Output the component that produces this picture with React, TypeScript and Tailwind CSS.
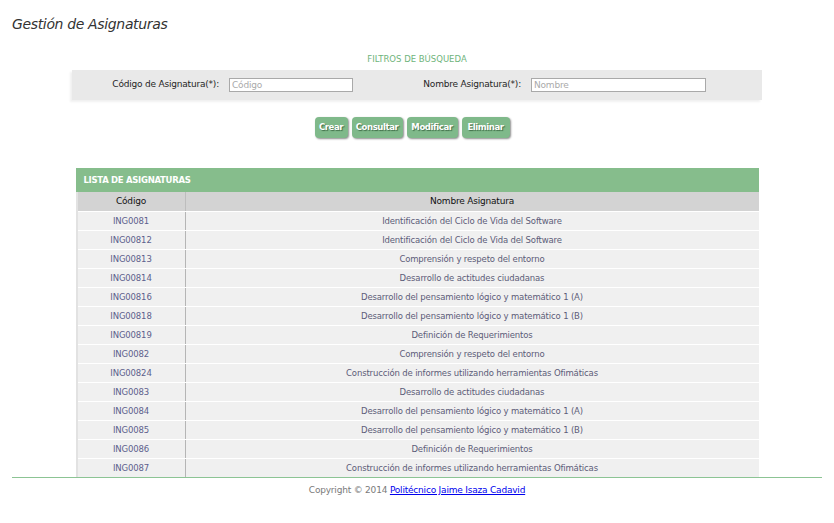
import React from "react";

const rows: [string, string][] = [
  ["ING0081", "Identificación del Ciclo de Vida del Software"],
  ["ING00812", "Identificación del Ciclo de Vida del Software"],
  ["ING00813", "Comprensión y respeto del entorno"],
  ["ING00814", "Desarrollo de actitudes ciudadanas"],
  ["ING00816", "Desarrollo del pensamiento lógico y matemático 1 (A)"],
  ["ING00818", "Desarrollo del pensamiento lógico y matemático 1 (B)"],
  ["ING00819", "Definición de Requerimientos"],
  ["ING0082", "Comprensión y respeto del entorno"],
  ["ING00824", "Construcción de informes utilizando herramientas Ofimáticas"],
  ["ING0083", "Desarrollo de actitudes ciudadanas"],
  ["ING0084", "Desarrollo del pensamiento lógico y matemático 1 (A)"],
  ["ING0085", "Desarrollo del pensamiento lógico y matemático 1 (B)"],
  ["ING0086", "Definición de Requerimientos"],
  ["ING0087", "Construcción de informes utilizando herramientas Ofimáticas"],
];

function Btn({ label, w }: { label: string; w: string }) {
  return (
    <button
      className={`${w} h-[21px] rounded-[4px] bg-[#7fb98a] text-white font-bold text-[8.5px] tracking-[-0.4px] [text-shadow:1px_1px_1px_#3d6b46] shadow-[1px_1px_2px_rgba(0,0,0,0.45)]`}
    >
      {label}
    </button>
  );
}

export default function App() {
  return (
    <div className="w-[834px] h-[523px] bg-white font-['DejaVu_Sans',sans-serif] overflow-hidden flex flex-col">
      <div className="px-[12px] flex-1 flex flex-col">
        <h1 className="mt-[15px] h-[18px] text-[14px] italic text-[#333] tracking-[-0.35px] leading-[18px]">
          Gestión de Asignaturas
        </h1>
        <div className="mt-[21px] text-center text-[8.5px] text-[#6fb47c] leading-[10px] h-[10px]">
          FILTROS DE BÚSQUEDA
        </div>
        <div className="mt-[6px] mx-auto w-[690px] h-[30px] bg-[#e9e9e9] shadow-[-2px_2px_2px_rgba(0,0,0,0.06)] flex items-center">
          <div className="w-[147px] text-right text-[9px] text-[#1f1f1f] tracking-[-0.2px]">
            Código de Asignatura(*):
          </div>
          <input
            className="ml-[10px] w-[124px] h-[14px] bg-white border border-[#a9a9a9] px-[2px] text-[9px] placeholder:text-[#aaa] tracking-[-0.2px] outline-none"
            placeholder="Código"
          />
          <div className="w-[168px] text-right text-[9px] text-[#1f1f1f] tracking-[-0.2px]">
            Nombre Asignatura(*):
          </div>
          <input
            className="ml-[10px] w-[175px] h-[14px] bg-white border border-[#a9a9a9] px-[2px] text-[9px] placeholder:text-[#aaa] tracking-[-0.2px] outline-none"
            placeholder="Nombre"
          />
        </div>
        <div className="mt-[17px] flex justify-center gap-[4px] pr-[10px]">
          <Btn label="Crear" w="w-[33px]" />
          <Btn label="Consultar" w="w-[51px]" />
          <Btn label="Modificar" w="w-[51px]" />
          <Btn label="Eliminar" w="w-[48px]" />
        </div>
        <div className="mt-[30px] mx-auto w-[683px] h-[309px] overflow-hidden">
          <div className="h-[24px] bg-[#86bd8c] flex items-center pl-[8px] text-white font-bold text-[8.5px] tracking-[-0.3px]">
            LISTA DE ASIGNATURAS
          </div>
          <div className="border-l-2 border-[#e2e2e2]">
            <div className="flex h-[19px] bg-[#d3d3d3] text-[9px] text-[#111] tracking-[-0.2px] items-center">
              <div className="w-[108px] text-center border-r border-[#bdbdbd] h-full flex items-center justify-center">Código</div>
              <div className="flex-1 text-center">Nombre Asignatura</div>
            </div>
            {rows.map(([c, n], i) => (
              <div
                key={i}
                className="flex h-[19px] bg-[#f0f0f0] border-t border-white text-[8.5px] text-[#5d5f8c] tracking-[-0.15px] items-center"
              >
                <div className="w-[108px] text-center border-r border-[#b5b5b5] h-full flex items-center justify-center">{c}</div>
                <div className="flex-1 text-center text-[#5c5c78]">{n}</div>
              </div>
            ))}
          </div>
        </div>
        <div className="border-t border-[#8cc494]" />
        <div className="mt-[6px] text-center text-[9px] text-[#7a7a7a] tracking-[-0.2px]">
          Copyright © 2014{" "}
          <a href="#" className="text-[#0000ee] underline">
            Politécnico Jaime Isaza Cadavid
          </a>
        </div>
      </div>
    </div>
  );
}
